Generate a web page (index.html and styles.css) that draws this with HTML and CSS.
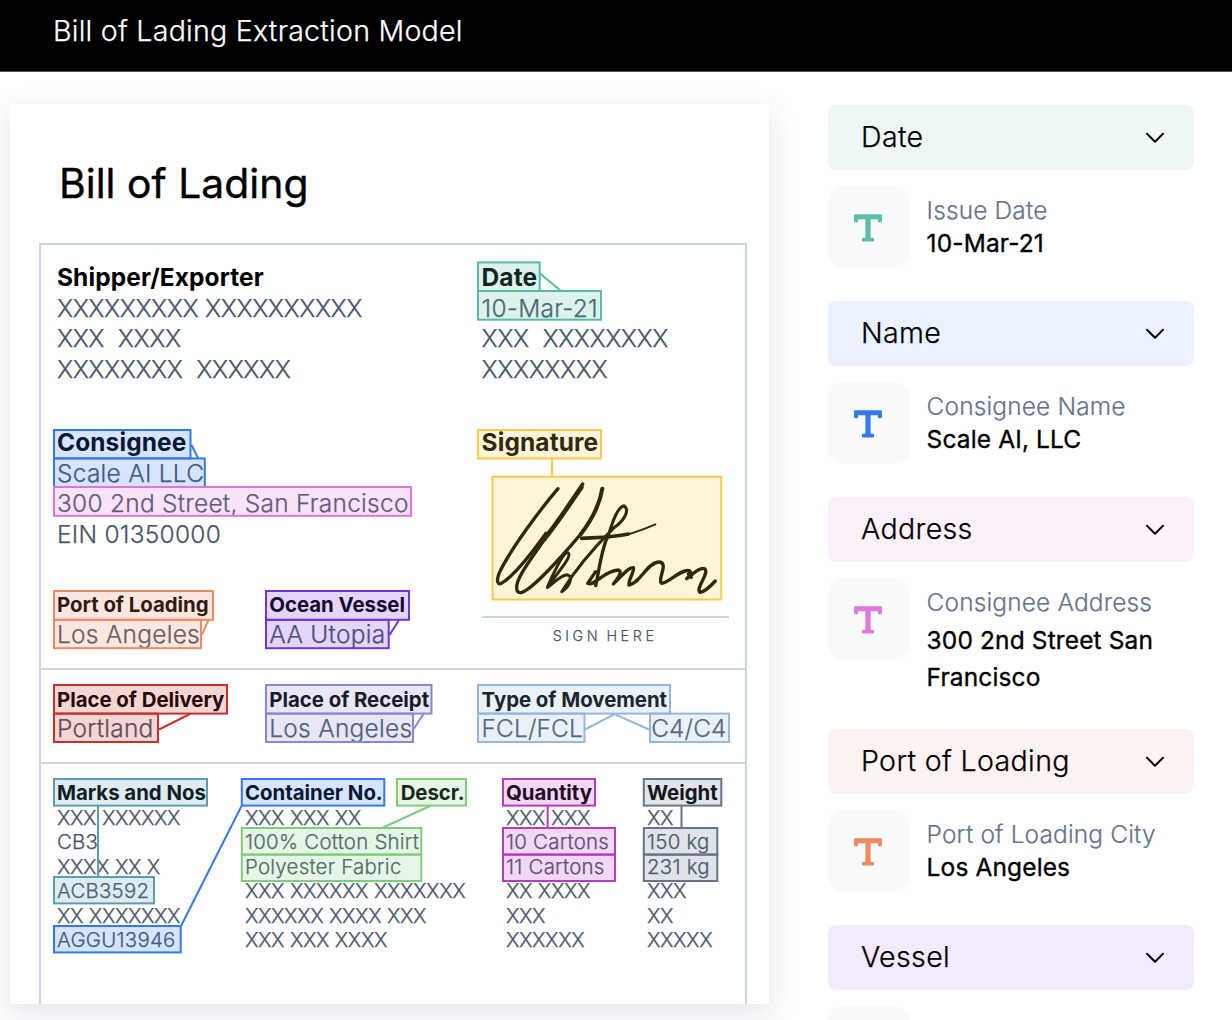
FILE: index.html
```html
<!DOCTYPE html>
<html lang="en">
<head>
<meta charset="utf-8">
<title>Bill of Lading Extraction Model</title>
<link rel="stylesheet" href="styles.css">
</head>
<body>
<svg width="0" height="0" class="defs" aria-hidden="true">
  <symbol id="chevron" viewBox="0 0 20 12"><path d="M2 1.7l8 8 8-8" fill="none" stroke="#000" stroke-width="2" stroke-linecap="round" stroke-linejoin="round"/></symbol>
  <symbol id="text-icon" viewBox="0 0 28 28"><path d="M1.3 0.3H26.7Q28 .3 28 1.6V6.8Q28 8.2 26.6 8.2H25Q24 8.2 24 7V5.2H16.6V23.8H18.8Q20 23.8 20 25V26.4Q20 27.6 18.8 27.6H9.2Q8 27.6 8 26.4V25Q8 23.8 9.2 23.8H11.4V5.2H4V7Q4 8.2 3 8.2H1.4Q0 8.2 0 6.8V1.6Q0 .3 1.3 .3Z" fill="currentColor"/></symbol>
</svg>
<header class="topbar">Bill of Lading Extraction Model</header>
<main class="content">
  <article class="sheet">
    <h1 class="sheet-title">Bill of Lading</h1>
    <div class="form">
      <div class="grid parties">
        <section class="wide">
          <h2>Shipper/Exporter</h2>
          <p class="x">XXXXXXXXX XXXXXXXXXX</p><p class="x">XXX&nbsp; XXXX</p><p class="x">XXXXXXXX&nbsp; XXXXXX</p>
        </section>
        <section>
          <h2>Date</h2>
          <p>10-Mar-21</p><p class="x">XXX&nbsp; XXXXXXXX</p><p class="x">XXXXXXXX</p>
        </section>
        <section class="wide">
          <h2>Consignee</h2>
          <p>Scale AI LLC</p><p>300 2nd Street, San Francisco</p><p>EIN 01350000</p>
        </section>
        <section class="sign">
          <h2>Signature</h2>
          <svg class="signature" viewBox="66 168 690 372" fill="none" stroke="#000" stroke-linecap="round" stroke-linejoin="round">
            <path stroke-width="10" d="M264 206C205 275 125 385 92 450C78 478 80 496 94 490C130 470 185 400 228 340"/>
            <path stroke-width="14" d="M334 202C300 250 262 310 222 358"/>
            <path stroke-width="10" d="M338 192C280 285 190 400 155 460C135 495 135 520 154 518C185 510 275 410 330 345"/>
            <path stroke-width="12" d="M397 206C390 250 365 300 332 343"/>
            <path stroke-width="9" d="M232 502C256 466 310 408 294 398C280 395 245 470 232 502C245 495 270 466 290 464C312 466 300 500 275 515C315 450 365 390 430 325C465 300 480 270 462 257C440 262 425 315 412 355"/>
            <path stroke-width="11" d="M335 355C390 352 430 352 475 342"/>
            <path stroke-width="6" d="M470 344C500 336 530 324 556 313"/>
            <path stroke-width="10" d="M410 355C390 410 388 450 377 497M377 455L353 490C375 500 400 452 445 450C460 455 440 480 430 492C450 475 475 440 490 443C495 455 475 475 477 495C510 490 530 430 565 426C600 425 560 480 575 490C595 490 635 445 658 452C668 460 655 470 650 476C665 465 690 440 704 446C720 460 675 505 690 517C705 515 725 495 736 483M655 462L664 472"/>
          </svg>
          <p class="sign-here">SIGN HERE</p>
        </section>
        <section class="ports">
          <h3>Port of Loading</h3><p>Los Angeles</p>
        </section>
        <section class="ports">
          <h3>Ocean Vessel</h3><p>AA Utopia</p>
        </section>
      </div>
      <div class="grid transit">
        <section><h3>Place of Delivery</h3><p>Portland</p></section>
        <section><h3>Place of Receipt</h3><p>Los Angeles</p></section>
        <section><h3>Type of Movement</h3><p class="pair"><span>FCL/FCL</span><span>C4/C4</span></p></section>
      </div>
      <div class="cargo">
        <section>
          <h3>Marks and Nos</h3>
          <p class="x">XXX XXXXXX</p><p>CB3</p><p class="x">XXXX XX X</p><p>ACB3592</p><p class="x">XX XXXXXXX</p><p>AGGU13946</p>
        </section>
        <section>
          <h3 class="heads"><span>Container No.</span><span>Descr.</span></h3>
          <p class="x">XXX XXX XX</p><p>100% Cotton Shirt</p><p>Polyester Fabric</p><p class="x">XXX XXXXXX XXXXXXX</p><p class="x">XXXXXX XXXX XXX</p><p class="x">XXX XXX XXXX</p>
        </section>
        <section>
          <h3>Quantity</h3>
          <p class="x">XXX XXX</p><p>10 Cartons</p><p>11 Cartons</p><p class="x">XX XXXX</p><p class="x">XXX</p><p class="x">XXXXXX</p>
        </section>
        <section>
          <h3>Weight</h3>
          <p class="x">XX</p><p>150 kg</p><p>231 kg</p><p class="x">XXX</p><p class="x">XX</p><p class="x">XXXXX</p>
        </section>
      </div>
    </div>
    <!-- Annotation layer: detected labels linked to their values -->
    <svg class="annotations" viewBox="10 104 759 900">
      <g class="c-green"><rect x="478" y="262.4" width="61.7" height="28.6"/><rect x="478" y="291" width="123" height="28.7"/><path d="M540 273.5L560.5 290.5"/></g>
      <g class="c-yellow"><rect x="478" y="430" width="123" height="28.5"/><rect x="492.5" y="476.7" width="228.8" height="122.8"/><path d="M552 459V476"/></g>
      <g class="c-blue"><rect x="54" y="430" width="136.5" height="28.4"/><rect x="54" y="458.4" width="150.8" height="28.6"/><path d="M191.5 445L198 458"/></g>
      <g class="c-pink"><rect x="54" y="487" width="357" height="28.8"/></g>
      <g class="c-orange"><rect x="54" y="591" width="159" height="28.8"/><rect x="54" y="619.8" width="147" height="28.4"/><path d="M208.5 620L202 634.5"/></g>
      <g class="c-purple"><rect x="266" y="591" width="143" height="28.8"/><rect x="266" y="619.8" width="122.7" height="28.4"/><path d="M399 620L389.5 635"/></g>
      <g class="c-red"><rect x="54" y="685" width="173" height="28.6"/><rect x="54" y="713.6" width="104" height="28.4"/><path d="M190 714L159 729.5"/></g>
      <g class="c-lavender"><rect x="266" y="685" width="165.5" height="28.6"/><rect x="266" y="713.6" width="147" height="28.4"/><path d="M423.5 714L414 728.5"/></g>
      <g class="c-sky"><rect x="478" y="685" width="192" height="28.6"/><rect x="478" y="713.6" width="106.5" height="28.4"/><rect x="650" y="713.6" width="79" height="28.4"/><path d="M585 729.5L614.5 714L649 729.5"/></g>
      <g class="c-teal"><rect x="54" y="779" width="153" height="26.6"/><rect x="54" y="877" width="100" height="26.4"/><path d="M98 806V877"/></g>
      <g class="c-blue"><rect x="241.8" y="779" width="142.5" height="26.6"/><rect x="54" y="926" width="126.7" height="26.4"/><path d="M241.5 806L181 926"/></g>
      <g class="c-lime"><rect x="397" y="779" width="69" height="26.6"/><rect x="241.8" y="828" width="179.5" height="26.6"/><rect x="241.8" y="854.6" width="179.5" height="26.4"/><path d="M430 806L383 827.5"/></g>
      <g class="c-magenta"><rect x="503" y="779" width="92" height="26.6"/><rect x="503" y="828" width="112" height="26.6"/><rect x="503" y="854.6" width="112" height="26.4"/><path d="M547.7 806V828"/></g>
      <g class="c-slate"><rect x="643.8" y="779" width="77.5" height="26.6"/><rect x="643.8" y="828" width="73.5" height="26.6"/><rect x="643.8" y="854.6" width="73.5" height="26.4"/><path d="M681.5 806V828"/></g>
    </svg>
  </article>
  <aside class="fields">
    <section class="field green">
      <h2 class="bar">Date<svg><use href="#chevron"/></svg></h2>
      <div class="entry"><div class="tile"><svg><use href="#text-icon"/></svg></div><div class="text"><p class="label">Issue Date</p><p class="value">10-Mar-21</p></div></div>
    </section>
    <section class="field blue">
      <h2 class="bar">Name<svg><use href="#chevron"/></svg></h2>
      <div class="entry"><div class="tile"><svg><use href="#text-icon"/></svg></div><div class="text"><p class="label">Consignee Name</p><p class="value">Scale AI, LLC</p></div></div>
    </section>
    <section class="field pink">
      <h2 class="bar">Address<svg><use href="#chevron"/></svg></h2>
      <div class="entry"><div class="tile"><svg><use href="#text-icon"/></svg></div><div class="text"><p class="label">Consignee Address</p><p class="value long">300 2nd Street San<br>Francisco</p></div></div>
    </section>
    <section class="field orange">
      <h2 class="bar">Port of Loading<svg><use href="#chevron"/></svg></h2>
      <div class="entry"><div class="tile"><svg><use href="#text-icon"/></svg></div><div class="text"><p class="label">Port of Loading City</p><p class="value">Los Angeles</p></div></div>
    </section>
    <section class="field purple">
      <h2 class="bar">Vessel<svg><use href="#chevron"/></svg></h2>
      <div class="entry"><div class="tile"></div></div>
    </section>
  </aside>
</main>
</body>
</html>
```
FILE: styles.css
```css
* { box-sizing: border-box; }
html { overflow: hidden; }
body { margin: 0; height: 1020px; overflow: hidden; background: #fff; color: #000; font-family: Inter, "Liberation Sans", sans-serif; }
h1, h2, h3, p { margin: 0; white-space: nowrap; }
.defs { position: absolute; }

.topbar { height: 71.5px; padding: 13px 0 0 53px; background: #000; border-bottom: 1px solid #555; color: #fff; font-size: 28.56px; line-height: 35px; font-weight: 300; letter-spacing: .25px; -webkit-text-stroke: .25px; }
.content { display: flex; align-items: flex-start; gap: 59px; height: 948.5px; overflow: hidden; padding: 32.5px 0 0 10px; }

.sheet { position: relative; width: 759px; height: 900px; padding: 54px 0 0 28.6px; background: #fff; box-shadow: 0 9px 28px rgba(30, 27, 90, .12); }
.sheet-title { padding-left: 20.4px; font-size: 40.8px; line-height: 50px; font-weight: 400; letter-spacing: .05px; -webkit-text-stroke: .4px; }
.form { width: 708px; height: 761px; margin-top: 35px; border: 2px solid #cbd5e1; border-bottom: 0; font-size: 24.48px; line-height: 30.6px; color: #475569; font-weight: 300; -webkit-text-stroke: .25px; }
.form p { letter-spacing: .26px; }
.form p.x { letter-spacing: -.5px; word-spacing: .5px; }
.form h2, .form h3 { -webkit-text-stroke: 0; }
.form h2 { color: #000; font-size: 24.48px; line-height: 30.6px; font-weight: 700; letter-spacing: .1px; }
.form h3 { color: #000; font-size: 20.4px; line-height: 29px; font-weight: 700; letter-spacing: -.03px; }

.grid { display: grid; grid-template-columns: repeat(3, 212.3px); padding-left: 16.4px; }
.parties { height: 424.5px; grid-template-rows: 165.3px 165.3px 1fr; padding-top: 17px; border-bottom: 2px solid #cbd5e1; }
.wide { grid-column: span 2; }
.sign { grid-column: 3; grid-row: 2 / span 2; }
.ports { margin-top: -2.4px; }
.signature { display: block; width: 230px; height: 124px; margin: 18px 0 0 10px; }
.form .sign-here { width: 247px; margin-top: 16px; padding-top: 8px; border-top: 2px solid #cbd5e1; text-align: center; font-size: 14.3px; line-height: 20px; letter-spacing: 3.6px; word-spacing: -2.5px; }
.transit { height: 94px; padding-top: 15px; border-bottom: 2px solid #cbd5e1; }
.transit h3 + p { margin-top: -.4px; }
.pair { display: flex; justify-content: space-between; width: 245px; }
.transit .pair { letter-spacing: .1px; }

.cargo { display: grid; grid-template-columns: 188px 261px 141px 1fr; padding: 17.5px 0 0 16.4px; font-size: 20.4px; line-height: 24.5px; }
.form .cargo h3 { line-height: 24.5px; }
.form .cargo p.x { letter-spacing: -.45px; }
.heads { display: flex; gap: 18px; }

.annotations { position: absolute; left: 0; top: 0; width: 759px; height: 900px; }
.annotations g { stroke: currentColor; stroke-width: 2; fill: none; }
.annotations rect { fill: currentColor; fill-opacity: .2; }
.c-green { color: #57bca5; }
.c-yellow { color: #f9ca4b; }
.c-blue { color: #3478f6; }
.c-pink { color: #dd75dd; }
.c-orange { color: #f08864; }
.c-purple { color: #7133e8; }
.c-red { color: #c9302c; }
.c-lavender { color: #8589d3; }
.c-sky { color: #98b7df; }
.c-teal { color: #5c9db2; }
.c-lime { color: #82cb7e; }
.c-magenta { color: #b73bc1; }
.c-slate { color: #64748b; }

.fields { width: 365.5px; padding-top: .6px; }
.field { margin-bottom: 33px; }
.bar { display: flex; align-items: center; justify-content: space-between; height: 65.2px; padding: 0 29px 1px 33px; border-radius: 8px; font-size: 28.56px; font-weight: 300; letter-spacing: .35px; -webkit-text-stroke: .25px; }
.bar svg { width: 20px; height: 12px; margin-top: 3px; }
.entry { display: flex; align-items: flex-start; gap: 17px; margin-top: 16.3px; }
.tile { display: flex; flex: none; width: 81.6px; height: 81.6px; padding: 28px 0 0 26px; border-radius: 16px; background: #f8fafc; }
.tile svg { width: 28px; height: 28px; }
.text { padding-top: 7.8px; font-size: 24.48px; line-height: 32.65px; }
.label { color: #64748b; font-weight: 300; letter-spacing: .14px; -webkit-text-stroke: .2px; }
.value { font-weight: 400; letter-spacing: .14px; -webkit-text-stroke: .35px; }
.long { margin-top: 3.5px; line-height: 36.7px; }
.green .bar { background: #eef7f6; }
.blue .bar { background: #ebf1fe; }
.pink .bar { background: #fbf1fb; }
.orange .bar { background: #fdf3f0; }
.purple .bar { background: #f1ebfd; }
.green .tile { color: #5abfa9; }
.blue .tile { color: #3478f6; }
.pink .tile { color: #df78df; }
.orange .tile { color: #f08864; }
```
